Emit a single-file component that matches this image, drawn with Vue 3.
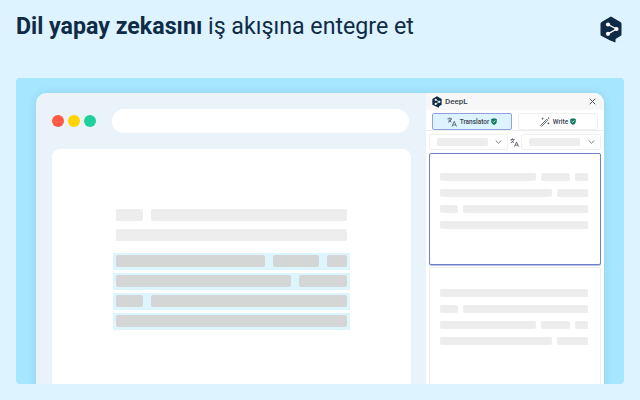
<script setup>
const mainPre = [
  { w: [27, 196] },
  { w: [231] },
]
const mainHi = [
  { w: [149, 46, 20] },
  { w: [175, 48] },
  { w: [27, 196] },
  { w: [231] },
]
const srcRows = [
  [96, 29, 13],
  [112, 31],
  [18, 125],
  [148],
]
const dstRows = [
  [148],
  [18, 125],
  [96, 29, 13],
  [112, 31],
]
</script>

<template>
  <div class="page">
    <header class="top">
      <h1 class="title"><b>Dil yapay zekasını</b> iş akışına entegre et</h1>
      <svg class="logo" width="22" height="27" viewBox="0 0 22 27">
        <path d="M11 0.5 20.4 5.9 Q21.5 6.5 21.5 7.8 V18.2 Q21.5 19.5 20.4 20.1 L15.6 22.9 15.4 26.5 10.2 24.4 1.6 20.1 Q0.5 19.5 0.5 18.2 V7.8 Q0.5 6.5 1.6 5.9 L10 0.9 Q10.5 0.5 11 0.5Z" fill="#0f2b46"/>
        <path d="M8 8.5 16.5 13 8 17.8" fill="none" stroke="#fff" stroke-width="1.4"/>
        <circle cx="8" cy="8.5" r="2.1" fill="#fff"/>
        <circle cx="16.5" cy="13" r="2.1" fill="#fff"/>
        <circle cx="8" cy="17.8" r="2.1" fill="#fff"/>
      </svg>
    </header>

    <section class="stage">
      <div class="browser">
        <div class="main">
          <div class="chrome">
            <div class="dots">
              <span class="dot red"></span>
              <span class="dot yellow"></span>
              <span class="dot green"></span>
            </div>
            <div class="address"></div>
          </div>
          <div class="sheet">
            <div class="line" v-for="(r, i) in mainPre" :key="'p' + i">
              <span v-for="(w, j) in r.w" :key="j" class="bar" :style="{ width: w + 'px' }"></span>
            </div>
            <div class="hi-group">
              <div class="hi" v-for="(r, i) in mainHi" :key="'h' + i">
                <span v-for="(w, j) in r.w" :key="j" class="bar dark" :style="{ width: w + 'px' }"></span>
              </div>
            </div>
          </div>
        </div>

        <aside class="side">
          <div class="side-head">
            <div class="brand">
              <svg width="10" height="12" viewBox="0 0 22 27">
                <path d="M11 0.5 21.5 6.5 V19.5 L15.6 22.9 15.4 26.5 10.2 24.4 0.5 19.5 V6.5Z" fill="#0f2b46"/>
                <path d="M8 8.5 16.5 13 8 17.8" fill="none" stroke="#fff" stroke-width="1.6"/>
                <circle cx="8" cy="8.5" r="2.4" fill="#fff"/>
                <circle cx="16.5" cy="13" r="2.4" fill="#fff"/>
                <circle cx="8" cy="17.8" r="2.4" fill="#fff"/>
              </svg>
              <span>DeepL</span>
            </div>
            <svg class="close" width="7" height="7" viewBox="0 0 7 7">
              <path d="M.7.7 6.3 6.3M6.3.7.7 6.3" stroke="#4a5560" stroke-width="1" fill="none"/>
            </svg>
          </div>

          <div class="tabs">
            <div class="tab active">
              <svg width="10" height="10" viewBox="0 0 10 10" fill="none" stroke="#46505a" stroke-width=".8">
                <path d="M.5 1.8H5M2.7.5V1.8M4.3 1.8C3.9 3.4 2.6 4.7 1 5.3M1.6 2.8C2.2 3.9 3.1 4.6 4.4 5"/>
                <path d="M5 9.5 7.2 4.4 9.5 9.5M5.8 8H8.7"/>
              </svg>
              <span>Translator</span>
              <svg class="shield" width="6" height="7" viewBox="0 0 6 7">
                <path d="M3 .2 5.8 1.1V3.4C5.8 5 4.6 6.3 3 6.8 1.4 6.3.2 5 .2 3.4V1.1Z" fill="#0f7a5f"/>
                <path d="M1.7 3.4 2.7 4.3 4.4 2.5" stroke="#fff" stroke-width=".8" fill="none"/>
              </svg>
            </div>
            <div class="tab">
              <svg width="10" height="10" viewBox="0 0 10 10" fill="none" stroke="#46505a" stroke-width=".8">
                <path d="M.6 8.4 6.8 2.2 7.8 3.2 1.6 9.4Z"/>
                <path d="M4.6 4.4 5.6 5.4" stroke-width=".7"/>
                <path d="M2.6 .6V2.6M1.6 1.6H3.6M8.4 5.4V7.4M7.4 6.4H9.4M8.6.4V1.8M7.9 1.1H9.3" stroke-width=".7"/>
              </svg>
              <span>Write</span>
              <svg class="shield" width="6" height="7" viewBox="0 0 6 7">
                <path d="M3 .2 5.8 1.1V3.4C5.8 5 4.6 6.3 3 6.8 1.4 6.3.2 5 .2 3.4V1.1Z" fill="#0f7a5f"/>
                <path d="M1.7 3.4 2.7 4.3 4.4 2.5" stroke="#fff" stroke-width=".8" fill="none"/>
              </svg>
            </div>
          </div>

          <div class="selects">
            <div class="select">
              <span class="sel-bar"></span>
              <svg class="chev" width="7" height="4" viewBox="0 0 7 4"><path d="M.7.5 3.5 3.2 6.3.5" fill="none" stroke="#6b737b" stroke-width=".9"/></svg>
            </div>
            <svg class="swap" width="9" height="9" viewBox="0 0 10 10" fill="none" stroke="#46505a" stroke-width=".9">
              <path d="M.5 1.8H5M2.7.5V1.8M4.3 1.8C3.9 3.4 2.6 4.7 1 5.3M1.6 2.8C2.2 3.9 3.1 4.6 4.4 5"/>
              <path d="M5 9.5 7.2 4.4 9.5 9.5M5.8 8H8.7"/>
            </svg>
            <div class="select wide">
              <span class="sel-bar"></span>
              <svg class="chev" width="7" height="4" viewBox="0 0 7 4"><path d="M.7.5 3.5 3.2 6.3.5" fill="none" stroke="#6b737b" stroke-width=".9"/></svg>
            </div>
          </div>

          <div class="box source">
            <div class="sline" v-for="(r, i) in srcRows" :key="'s' + i">
              <span v-for="(w, j) in r" :key="j" class="sbar" :style="{ width: w + 'px' }"></span>
            </div>
          </div>
          <div class="box target">
            <div class="sline" v-for="(r, i) in dstRows" :key="'d' + i">
              <span v-for="(w, j) in r" :key="j" class="sbar" :style="{ width: w + 'px' }"></span>
            </div>
          </div>
        </aside>
      </div>
    </section>
  </div>
</template>

<style scoped>
.page {
  width: 640px;
  height: 400px;
  overflow: hidden;
  background: #ddf3ff;
  display: flex;
  flex-direction: column;
  font-family: Roboto, "Liberation Sans", sans-serif;
}
.top {
  height: 78px;
  flex: none;
  box-sizing: border-box;
  padding: 12px 18px 0 16px;
  display: flex;
  justify-content: space-between;
  align-items: flex-start;
}
.title {
  margin: 0;
  font-size: 23.2px;
  line-height: 28px;
  font-weight: 400;
  color: #0f2b46;
}
.title b { font-weight: 700; }
.logo { margin-top: 4px; }

.stage {
  height: 306px;
  margin: 0 16px;
  flex: none;
  box-sizing: border-box;
  padding: 15px 20px 0;
  background: #a6e7ff;
  border-radius: 4px;
  overflow: hidden;
}
.browser {
  height: 320px;
  display: flex;
  border-radius: 10px;
  box-shadow: 0 0 10px rgba(15, 43, 70, 0.12);
}
.main {
  width: 390px;
  box-sizing: border-box;
  background: #eaf3f9;
  border-radius: 10px 0 0 0;
  padding: 16px 15px 0 16px;
}
.chrome {
  display: flex;
  align-items: center;
  height: 24px;
  padding-right: 2px;
}
.dots {
  display: flex;
  gap: 4px;
  width: 60px;
  flex: none;
}
.dot {
  width: 12px;
  height: 12px;
  border-radius: 50%;
}
.red { background: #ff5a44; }
.yellow { background: #ffd400; }
.green { background: #1fd09a; }
.address {
  flex: 1;
  height: 24px;
  border-radius: 12px;
  background: #fff;
}
.sheet {
  margin-top: 16px;
  height: 260px;
  background: #fff;
  border-radius: 8px 8px 0 0;
  box-sizing: border-box;
  padding: 60px 0 0 64px;
}
.line {
  display: flex;
  gap: 8px;
  height: 12px;
  margin-bottom: 8px;
}
.bar {
  height: 12px;
  background: #ededed;
  border-radius: 2px;
}
.bar.dark { background: #d4d6d6; }
.hi-group {
  margin: 12px 0 0 -3px;
  display: flex;
  flex-direction: column;
  gap: 3px;
  width: 237px;
}
.hi {
  box-sizing: border-box;
  height: 17px;
  padding: 2px 3px;
  display: flex;
  gap: 8px;
  background: #ddf5ff;
}

.side {
  width: 178px;
  background: #fff;
  border-radius: 0 10px 0 0;
  display: flex;
  flex-direction: column;
}
.side-head {
  height: 17px;
  flex: none;
  box-sizing: border-box;
  padding: 0 8px 0 6px;
  display: flex;
  align-items: center;
  justify-content: space-between;
  background: #f7f7f7;
  border-radius: 0 10px 0 0;
}
.brand {
  display: flex;
  align-items: center;
  gap: 3px;
  font-size: 8px;
  font-weight: 500;
  color: #37424d;
}
.tabs {
  flex: none;
  display: flex;
  gap: 6px;
  padding: 3px 6px 0;
  height: 17px;
  border-bottom: 1px solid #eeeeee;
}
.tab {
  width: 80px;
  height: 17px;
  box-sizing: border-box;
  border: 1px solid #f0f0f0;
  border-radius: 2px;
  display: flex;
  align-items: center;
  justify-content: center;
  gap: 2px;
  font-size: 6.5px;
  font-weight: 500;
  color: #37424d;
}
.tab span { margin-left: 1px; }
.tab.active {
  background: #ddf3ff;
  border-color: #8fa3e0;
}
.selects {
  flex: none;
  display: flex;
  align-items: center;
  height: 16px;
  margin: 3px 3px 0;
}
.select {
  width: 79px;
  height: 16px;
  box-sizing: border-box;
  border: 1px solid #f0f0f0;
  border-radius: 2px;
  display: flex;
  align-items: center;
  justify-content: space-between;
  padding: 0 5px 0 7px;
}
.select.wide { width: 80px; }
.swap { margin: 0 2px; flex: none; }
.sel-bar {
  width: 51px;
  height: 8px;
  background: #ededed;
  border-radius: 2px;
}
.box {
  width: 172px;
  box-sizing: border-box;
  margin-left: 3px;
  padding: 0 12px 0 10px;
  flex: none;
  display: flex;
  flex-direction: column;
  gap: 8px;
  background: #fff;
}
.source {
  margin-top: 3px;
  height: 112px;
  padding-top: 19px;
  border: 1px solid #6f80c9;
  border-radius: 2px;
  box-shadow: 0 1px 0 #b4bfe6;
}
.target {
  margin-top: 2px;
  height: 130px;
  padding-top: 21px;
  border: 1px solid #eeeeee;
  border-radius: 2px;
}
.sline {
  display: flex;
  justify-content: space-between;
  width: 148px;
  height: 8px;
}
.sbar {
  height: 8px;
  background: #ededed;
  border-radius: 2px;
}
</style>
